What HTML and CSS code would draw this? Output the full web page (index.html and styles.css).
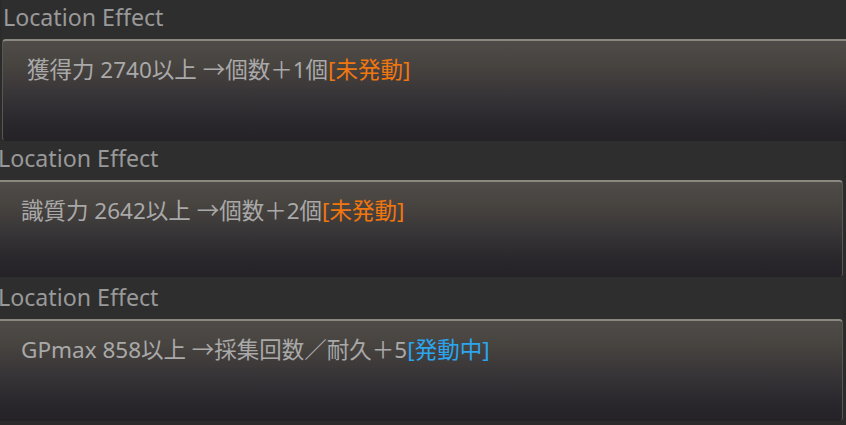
FILE: index.html
```html
<!DOCTYPE html>
<html lang="ja">
<head>
<meta charset="utf-8">
<link rel="stylesheet" href="styles.css">
</head>
<body>
<div class="stack">
  <section class="effect effect--first">
    <div class="effect__title">Location Effect</div>
    <div class="effect__box">
      <p class="effect__text">獲得力 2740以上 →個数＋1個<span class="status status--off">[未発動]</span></p>
    </div>
  </section>
  <section class="effect effect--second">
    <div class="effect__title">Location Effect</div>
    <div class="effect__box effect__box--short">
      <p class="effect__text">識質力 2642以上 →個数＋2個<span class="status status--off">[未発動]</span></p>
    </div>
  </section>
  <section class="effect effect--third">
    <div class="effect__title effect__title--tall">Location Effect</div>
    <div class="effect__box">
      <p class="effect__text">GPmax 858以上 →採集回数／耐久＋5<span class="status status--on">[発動中]</span></p>
    </div>
  </section>
</div>
</body>
</html>
```

FILE: styles.css
```css
html, body {
  margin: 0;
  padding: 0;
  background: #2b2b2c;
  overflow: hidden;
}

body {
  width: 846px;
  height: 425px;
  font-family: "Noto Sans", "Noto Sans CJK JP", sans-serif;
}

.stack {
  display: flex;
  flex-direction: column;
}

.effect {
  display: flex;
  flex-direction: column;
  width: 847px;
  background: #2e2e2e;
}

.effect--first {
  margin-left: 2px;
}

.effect--second,
.effect--third {
  margin-left: -4px;
}

.effect__title {
  height: 39px;
  box-sizing: border-box;
  padding-left: 1px;
  font-size: 23.2px;
  line-height: 35px;
  color: #999999;
}

.effect--second .effect__title {
  padding-left: 2px;
}

.effect__title--tall {
  height: 42px;
  line-height: 40px;
  padding-left: 2px;
}

.effect__box {
  height: 102px;
  box-sizing: border-box;
  border: 1px solid #5a5650;
  border-top: 2px solid #8b887f;
  border-bottom-color: #242226;
  border-radius: 4px;
  background: linear-gradient(to bottom, #4f4b48 0%, #47433f 25%, #353236 60%, #28262a 85%, #252327 100%);
  padding: 14px 0 0 24px;
}

.effect__box--short {
  height: 97px;
}

.effect__text {
  margin: 0;
  font-size: 22.5px;
  line-height: 30px;
  color: #a9a9a9;
  white-space: nowrap;
}

.status--off {
  color: #f0760f;
}

.status--on {
  color: #2ba6ee;
}
```
